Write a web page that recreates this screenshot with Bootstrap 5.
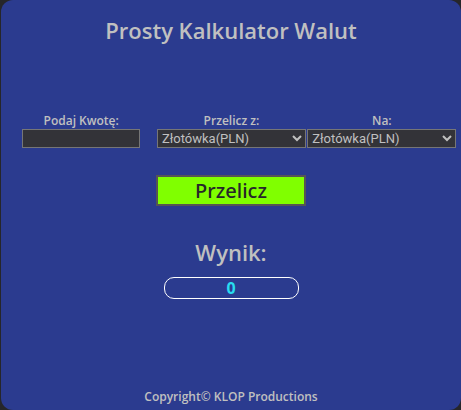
<!DOCTYPE html>
<html lang="pl">
<head>
<meta charset="utf-8">
<meta name="viewport" content="width=device-width, initial-scale=1">
<title>Prosty Kalkulator Walut</title>
<link href="https://cdn.jsdelivr.net/npm/bootstrap@5.3.0/dist/css/bootstrap.min.css" rel="stylesheet">
<style>
body { background: #26262a; color: #c0c0c0; font-family: "Open Sans", sans-serif; font-weight: 600; }
.calc { background: #2b3b8f; border-radius: 12px; margin-left: 1px; }
.heading { font-size: 22px; line-height: 30px; font-weight: 600; }
.main-heading { margin-top: 15px; }
.fields { padding: 0 4px 0 5px; margin-top: 68px; }
.field-label, .copyright { font-size: 12px; line-height: 16px; }
.field { background-color: #333338; color: #c0c0c0; border: 1px solid #767676; border-radius: 0; height: 19px; padding: 0; font-family: Roboto, sans-serif; font-size: 13px; line-height: 17px; }
.amount { width: 118px; }
.currency { width: 149px; }
.convert { width: 150px; height: 31px; margin-top: 27px; padding: 1px 0 0; border: 2px solid #555; background: #80ff00; color: #26262a; font-family: "Noto Sans", sans-serif; font-size: 20px; line-height: 26px; font-weight: 500; }
.result-heading { margin-top: 31px; }
.result { width: 135px; height: 22px; margin-top: 10px; border: 1px solid #fff; border-radius: 10px; color: #28dcf0; font-size: 16px; line-height: 20px; font-weight: 700; }
.copyright { padding-bottom: 5px; }
</style>
</head>
<body>
<div class="calc min-vh-100 d-flex flex-column align-items-center text-center">
  <h1 class="heading main-heading mb-0">Prosty Kalkulator Walut</h1>
  <form class="w-100 d-flex flex-column align-items-center">
    <div class="fields row g-0 w-100">
      <div class="col-4 d-flex flex-column align-items-center">
        <label class="field-label" for="amount">Podaj Kwotę:</label>
        <input class="field amount" id="amount" type="text">
      </div>
      <div class="col-4 d-flex flex-column align-items-center">
        <label class="field-label" for="from">Przelicz z:</label>
        <select class="field currency" id="from"><option>Złotówka(PLN)</option></select>
      </div>
      <div class="col-4 d-flex flex-column align-items-center">
        <label class="field-label" for="to">Na:</label>
        <select class="field currency" id="to"><option>Złotówka(PLN)</option></select>
      </div>
    </div>
    <button class="convert" type="button">Przelicz</button>
  </form>
  <h2 class="heading result-heading mb-0">Wynik:</h2>
  <output class="result d-block">0</output>
  <footer class="copyright mt-auto">Copyright© KLOP Productions</footer>
</div>
<script src="https://cdn.jsdelivr.net/npm/bootstrap@5.3.0/dist/js/bootstrap.bundle.min.js"></script>
</body>
</html>
